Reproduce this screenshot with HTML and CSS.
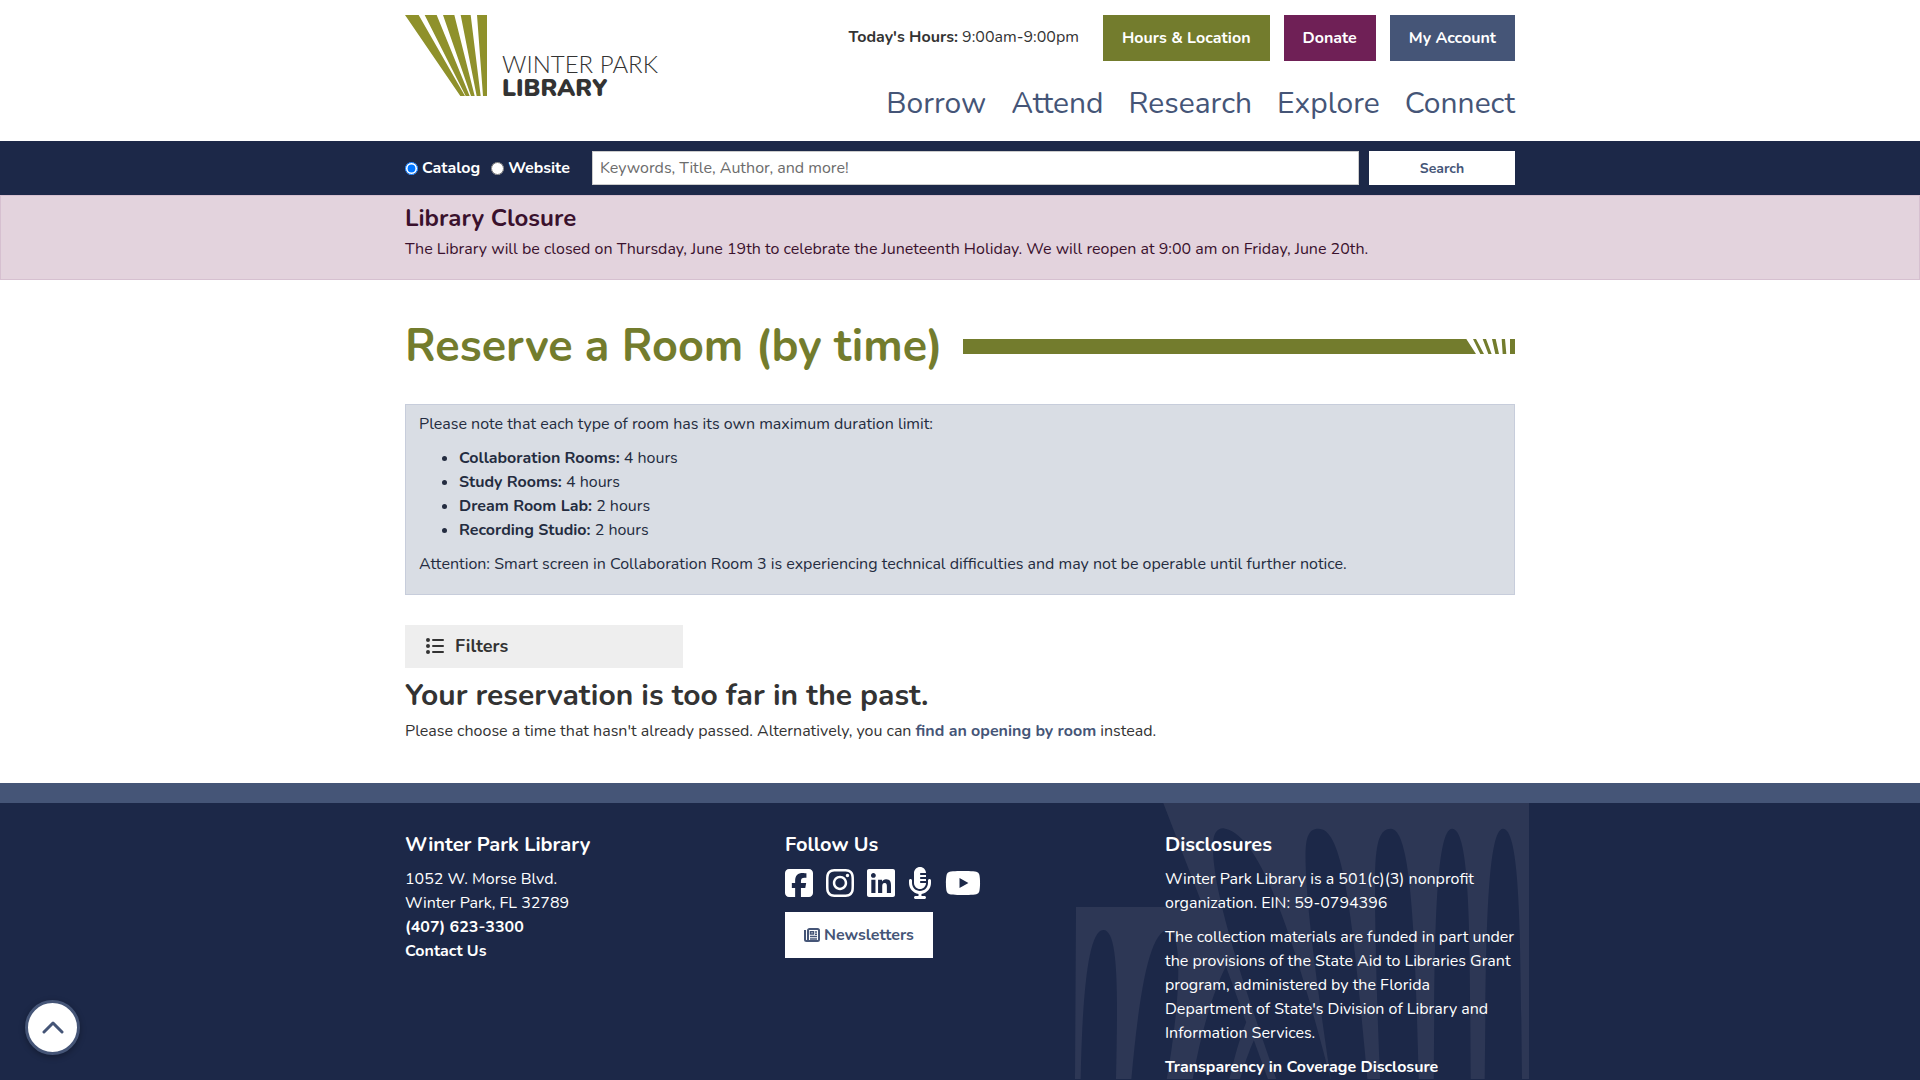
FILE: index.html
```
<!DOCTYPE html>
<html lang="en">
<head>
<meta charset="utf-8">
<meta name="viewport" content="width=device-width, initial-scale=1">
<title>Reserve a Room (by time) | Winter Park Library</title>
<link rel="stylesheet" href="styles.css">
</head>
<body>
<header class="site-header">
  <div class="container header-row">
    <a class="logo" href="#" aria-label="Winter Park Library home">
      <svg class="logo-mark" viewBox="0 0 246 243" aria-hidden="true">
        <path d="M0 0H41L180 243H166ZM59 0H95L194 243H182ZM114 0H148L209 243H198ZM167 0H197L227 243H215ZM216 0H246V243H234Z"/>
      </svg>
      <span class="logo-text"><span class="logo-top">WINTER PARK</span><span class="logo-bottom">LIBRARY</span></span>
    </a>
    <div class="header-right">
      <div class="utility">
        <p class="hours"><strong>Today's Hours:</strong> 9:00am-9:00pm</p>
        <a class="btn btn-green" href="#">Hours &amp; Location</a>
        <a class="btn btn-plum" href="#">Donate</a>
        <a class="btn btn-blue" href="#">My Account</a>
      </div>
      <nav class="main-nav" aria-label="Main">
        <a href="#">Borrow</a>
        <a href="#">Attend</a>
        <a href="#">Research</a>
        <a href="#">Explore</a>
        <a href="#">Connect</a>
      </nav>
    </div>
  </div>
</header>

<div class="search-bar">
  <form class="container search-form">
    <div class="search-scope">
      <label class="scope"><input type="radio" name="scope" value="catalog" checked>Catalog</label>
      <label class="scope"><input type="radio" name="scope" value="website">Website</label>
    </div>
    <input class="search-input" type="text" placeholder="Keywords, Title, Author, and more!" aria-label="Search terms">
    <button class="search-button" type="button">Search</button>
  </form>
</div>

<section class="alert">
  <div class="container">
    <h2 class="alert-title">Library Closure</h2>
    <p>The Library will be closed on Thursday, June 19th to celebrate the Juneteenth Holiday. We will reopen at 9:00 am on Friday, June 20th.</p>
  </div>
</section>

<main class="container main">
  <div class="title-row">
    <h1>Reserve a Room (by time)</h1>
    <div class="title-rule">
      <svg class="rule-end" viewBox="0 0 147 45" aria-hidden="true">
        <path d="M0 0H1L30 45H0ZM21 0H30L54 45H43ZM50 0H60L77 45H67ZM78 0H89L99 45H88ZM107 0H117L121 45H110ZM132 0H147V45H132Z"/>
      </svg>
    </div>
  </div>
  <section class="notice">
    <p>Please note that each type of room has its own maximum duration limit:</p>
    <ul>
      <li><strong>Collaboration Rooms:</strong> 4 hours</li>
      <li><strong>Study Rooms:</strong> 4 hours</li>
      <li><strong>Dream Room Lab:</strong> 2 hours</li>
      <li><strong>Recording Studio:</strong> 2 hours</li>
    </ul>
    <p>Attention: Smart screen in Collaboration Room 3 is experiencing technical difficulties and may not be operable until further notice.</p>
  </section>
  <button class="filters" type="button">
    <svg class="filters-icon" viewBox="0 0 18 18" aria-hidden="true">
      <circle cx="2" cy="3" r="2"/><circle cx="2" cy="9" r="2"/><circle cx="2" cy="15" r="2"/>
      <rect x="6" y="2" width="12" height="2" rx="1"/><rect x="6" y="8" width="12" height="2" rx="1"/><rect x="6" y="14" width="12" height="2" rx="1"/>
    </svg>
    Filters
  </button>
  <h2 class="message-title">Your reservation is too far in the past.</h2>
  <p>Please choose a time that hasn't already passed. Alternatively, you can <a class="text-link" href="#">find an opening by room</a> instead.</p>
</main>

<footer class="site-footer">
  <div class="container footer-grid">
    <svg class="watermark" viewBox="75 84 1363 830" preserveAspectRatio="xMinYMin slice" aria-hidden="true">
      <path class="wm-light" d="M75 915L78 396H460L340 84H1438V915Z"/>
      <path class="wm-dark" d="M92 915C96 700 110 465 160 465C205 465 204 640 198 915Z"/>
      <path class="wm-dark" d="M244 915C262 720 290 465 355 465C405 475 385 720 350 915Z"/>
      <path class="wm-dark" d="M528 574L589 742C570 790 552 850 538 915H428C450 790 485 660 528 574Z"/>
      <path class="wm-dark" d="M612 796L655 915H570C582 872 596 832 612 796Z"/>
      <path class="wm-dark" d="M680 915C600 680 489 370 489 215C489 178 500 160 520 160C625 175 720 440 843 915Z"/>
      <path class="wm-dark" d="M843 915C800 620 767 380 767 240C767 180 780 161 806 161C880 161 905 400 953 915Z"/>
      <path class="wm-dark" d="M991 915C982 700 974 440 976 290C978 195 993 161 1023 161C1085 161 1095 480 1107 915Z"/>
      <path class="wm-dark" d="M1152 915C1155 620 1150 161 1207 161C1265 161 1260 520 1263 915Z"/>
      <path class="wm-dark" d="M1305 915C1309 620 1305 161 1360 161C1415 161 1412 520 1417 915Z"/>
    </svg>
    <section>
      <h2>Winter Park Library</h2>
      <p>1052 W. Morse Blvd.<br>Winter Park, FL 32789<br><a href="#">(407) 623-3300</a><br><a href="#">Contact Us</a></p>
    </section>
    <section>
      <h2>Follow Us</h2>
      <div class="social">
        <a href="#" aria-label="Facebook"><svg viewBox="0 0 448 512" aria-hidden="true"><path d="M64 32C28.700 32 0 60.700 0 96V416c0 35.300 28.700 64 64 64h98.200V334.200H109.400V256h52.800V222.300c0-87.100 39.400-127.500 125-127.500c16.200 0 44.200 3.200 55.700 6.400V172c-6-.6-16.500-1-29.600-1c-42 0-58.200 15.900-58.200 57.200V256h83.600l-14.400 78.200H255V480H384c35.300 0 64-28.700 64-64V96c0-35.300-28.700-64-64-64H64z"/></svg></a>
        <a href="#" aria-label="Instagram"><svg viewBox="0 0 448 512" aria-hidden="true"><path d="M224.100 141c-63.600 0-114.900 51.300-114.900 114.900s51.300 114.900 114.900 114.900S339 319.500 339 255.900 287.700 141 224.100 141zm0 189.600c-41.100 0-74.700-33.500-74.700-74.700s33.500-74.700 74.700-74.700 74.700 33.500 74.700 74.700-33.600 74.700-74.700 74.700zm146.400-194.300c0 14.900-12 26.800-26.800 26.800-14.900 0-26.800-12-26.800-26.800s12-26.800 26.800-26.800 26.800 12 26.800 26.800zm76.100 27.200c-1.700-35.900-9.900-67.700-36.200-93.900-26.200-26.200-58-34.400-93.900-36.200-37-2.100-147.900-2.100-184.900 0-35.800 1.700-67.600 9.900-93.900 36.100s-34.400 58-36.200 93.900c-2.100 37-2.100 147.900 0 184.900 1.700 35.900 9.900 67.700 36.200 93.900s58 34.400 93.900 36.200c37 2.100 147.900 2.100 184.900 0 35.900-1.700 67.700-9.900 93.900-36.200 26.200-26.200 34.400-58 36.200-93.900 2.100-37 2.100-147.800 0-184.800zM398.800 388c-7.800 19.600-22.900 34.700-42.600 42.600-29.500 11.700-99.500 9-132.100 9s-102.700 2.600-132.100-9c-19.600-7.800-34.700-22.900-42.600-42.600-11.700-29.500-9-99.500-9-132.100s-2.600-102.700 9-132.100c7.800-19.600 22.900-34.700 42.600-42.600 29.500-11.700 99.500-9 132.100-9s102.700-2.600 132.100 9c19.600 7.800 34.700 22.900 42.600 42.600 11.700 29.500 9 99.500 9 132.100s2.700 102.700-9 132.100z"/></svg></a>
        <a href="#" aria-label="LinkedIn"><svg viewBox="0 0 448 512" aria-hidden="true"><path d="M416 32H31.900C14.300 32 0 46.500 0 64.300v383.400C0 465.500 14.300 480 31.900 480H416c17.600 0 32-14.500 32-32.300V64.300c0-17.800-14.400-32.300-32-32.300zM135.400 416H69V202.200h66.500V416zm-33.200-243c-21.300 0-38.500-17.300-38.500-38.500S80.900 96 102.200 96c21.200 0 38.500 17.300 38.500 38.500 0 21.300-17.200 38.500-38.500 38.500zm282.100 243h-66.400V312c0-24.800-.5-56.700-34.500-56.700-34.600 0-39.900 27-39.900 54.900V416h-66.400V202.200h63.700v29.200h.9c8.900-16.800 30.600-34.500 62.900-34.500 67.200 0 79.700 44.300 79.700 101.900V416z"/></svg></a>
        <a href="#" aria-label="Podcast"><svg viewBox="0 0 384 512" aria-hidden="true"><path d="M192 0C139 0 96 43 96 96V256c0 53 43 96 96 96s96-43 96-96H208c-8.800 0-16-7.200-16-16s7.200-16 16-16h80V192H208c-8.800 0-16-7.200-16-16s7.200-16 16-16h80V128H208c-8.800 0-16-7.200-16-16s7.200-16 16-16h80c0-53-43-96-96-96zM320 240v16c0 70.700-57.300 128-128 128s-128-57.300-128-128V216c0-13.300-10.700-24-24-24s-24 10.700-24 24v40c0 89.100 66.200 162.700 152 174.400V464H120c-13.300 0-24 10.700-24 24s10.700 24 24 24h72 72c13.300 0 24-10.700 24-24s-10.700-24-24-24H216V430.400c85.800-11.700 152-85.300 152-174.400V216c0-13.300-10.700-24-24-24s-24 10.700-24 24v24z"/></svg></a>
        <a href="#" aria-label="YouTube"><svg viewBox="0 0 576 512" aria-hidden="true"><path d="M549.700 124.100c-6.300-23.700-24.800-42.300-48.300-48.600C458.800 64 288 64 288 64S117.200 64 74.600 75.500c-23.500 6.300-42 24.900-48.300 48.600-11.400 42.900-11.400 132.300-11.400 132.300s0 89.400 11.400 132.300c6.300 23.700 24.800 41.500 48.300 47.800C117.200 448 288 448 288 448s170.800 0 213.400-11.500c23.500-6.300 42-24.200 48.300-47.800 11.400-42.900 11.400-132.300 11.400-132.300s0-89.400-11.400-132.300zm-317.500 213.500V175.200l142.700 81.200-142.700 81.200z"/></svg></a>
      </div>
      <a class="btn btn-white" href="#">
        <svg class="news-icon" viewBox="0 0 16 14" aria-hidden="true"><path d="M1 2V11.500A1.500 1.500 0 0 0 4 11.500V2.500A1.500 1.500 0 0 1 5.500 1H13.500A1.500 1.500 0 0 1 15 2.500V11.500A1.500 1.500 0 0 1 13.500 13H2.500"/><path class="news-lines" d="M6 8.500H13M6 11H13M11 4H13M11 6.200H13M6.500 3.800H9.500V6H6.500Z"/></svg>
        Newsletters
      </a>
    </section>
    <section>
      <h2>Disclosures</h2>
      <p class="disclosure">Winter Park Library is a 501(c)(3) nonprofit organization. EIN: 59-0794396</p>
      <p class="disclosure">The collection materials are funded in part under the provisions of the State Aid to Libraries Grant program, administered by the Florida Department of State's Division of Library and Information Services.</p>
      <p class="disclosure"><a href="#">Transparency in Coverage Disclosure</a></p>
    </section>
  </div>
</footer>

<button class="to-top" type="button" aria-label="Back to top">
  <svg viewBox="0 0 22 13" aria-hidden="true"><path d="M2 11L11 2L20 11"/></svg>
</button>
</body>
</html>
```
FILE: styles.css
```
* { box-sizing: border-box; }
body {
  margin: 0;
  min-height: 100vh;
  display: flex;
  flex-direction: column;
  background: #fff;
  color: #333;
  font: 16px/24px Nunito, Lato, sans-serif;
}
h1, h2, p, ul { margin: 0; }
a { text-decoration: none; }
button, input { font-family: inherit; }
.container { width: 100%; max-width: 1110px; margin: 0 auto; }

/* Header */
.site-header { padding: 15px 0; }
.header-row { display: flex; justify-content: space-between; align-items: flex-start; }
.logo { display: flex; align-items: flex-end; gap: 15px; color: #333; }
.logo-mark { width: 82px; height: 81px; fill: #8f912b; }
.logo-text { display: flex; flex-direction: column; font-size: 24px; line-height: 24px; margin-bottom: -4px; }
.logo-top { font-family: Lato, sans-serif; font-weight: 300; }
.logo-bottom { font-weight: 900; }
.utility { display: flex; align-items: center; justify-content: flex-end; gap: 14px; }
.hours { margin: 0 10px 2px 0; }
.btn {
  display: inline-flex;
  align-items: center;
  gap: 4px;
  height: 46px;
  padding: 0 19px;
  color: #fff;
  font-weight: 700;
}
.btn-green { background: #737c2d; }
.btn-plum { background: #6f2056; }
.btn-blue { background: #455577; }
.btn-white { background: #fff; color: #455577; }
.main-nav { display: flex; justify-content: flex-end; gap: 25px; margin-top: 21px; }
.main-nav a { color: #455577; font-size: 30px; line-height: 44px; }

/* Search */
.search-bar { background: #1c2848; padding: 10px 0; }
.search-form { display: flex; gap: 10px; }
.search-scope { display: flex; align-items: center; gap: 11px; width: 177px; color: #fff; font-weight: 700; }
.scope { display: flex; align-items: center; gap: 4px; }
.scope input { width: 13px; height: 13px; margin: 0; }
.search-input {
  flex: 1;
  height: 34px;
  padding: 0 7px;
  border: 1px solid #ccc;
  font-size: 16px;
  color: #333;
}
.search-input::placeholder { color: #6c6c6c; }
.search-button { width: 146px; height: 34px; border: 0; background: #fff; color: #455577; font-size: 14px; font-weight: 700; }

/* Closure alert */
.alert { padding: 7px 0 18px; border: 1px solid #d6c0d0; background: #e3d3dd; color: #3a112d; }
.alert-title { margin-bottom: 4px; font-size: 24px; line-height: 30px; }

/* Main content */
.main { padding-bottom: 40px; }
.title-row { display: flex; align-items: center; gap: 20px; padding: 37px 0 27px; }
h1 { color: #737c2d; font-size: 45px; line-height: 60px; font-weight: 700; }
.title-rule {
  flex: 1;
  display: flex;
  justify-content: flex-end;
  height: 15px;
  margin-bottom: 2px;
}
.title-rule::before { content: ""; flex: 1; background: #737c2d; }
.rule-end { width: 49px; height: 15px; fill: #737c2d; }
.notice { padding: 7px 13px 18px; border: 1px solid #c7cddb; background: #d9dde4; color: #242c40; }
.notice ul { margin: 10px 0; padding-left: 40px; }
.filters {
  display: flex;
  align-items: center;
  gap: 11px;
  width: 278px;
  height: 43px;
  margin: 30px 0 10px;
  padding: 0 21px 2px;
  border: 0;
  background: #eee;
  color: #333;
  font-size: 18px;
  font-weight: 700;
}
.filters-icon { width: 18px; height: 18px; fill: #333; }
.message-title { margin-bottom: 5px; font-size: 30px; line-height: 36px; }
.text-link { color: #455577; font-weight: 700; }

/* Footer */
.site-footer { flex: 1; border-top: 20px solid #455577; background: #1c2848; color: #fff; }
.footer-grid { position: relative; display: grid; grid-template-columns: repeat(3, 1fr); gap: 30px; height: 100%; padding-top: 30px; }
.footer-grid section { position: relative; }
.footer-grid h2 { margin-bottom: 10px; font-size: 20px; line-height: 24px; }
.footer-grid section a { color: #fff; font-weight: 700; }
.footer-grid section .btn-white { color: #455577; }
.watermark { position: absolute; top: 0; right: -14px; width: 454px; height: 100%; }
.wm-light { fill: #2d3755; }
.wm-dark { fill: #1c2848; }
.social { display: flex; gap: 13px; height: 32px; margin-bottom: 13px; }
.social svg { display: block; height: 32px; fill: #fff; }
.news-icon { width: 16px; height: 14px; fill: none; stroke: #455577; stroke-width: 2; }
.news-lines { stroke-width: 1.5; }
.disclosure { margin-bottom: 10px; }
.disclosure:last-child { margin-bottom: 0; }

/* Back to top */
.to-top {
  position: fixed;
  left: 25px;
  bottom: 25px;
  display: grid;
  place-items: center;
  width: 55px;
  height: 55px;
  padding: 0;
  border: 3px solid #455577;
  border-radius: 50%;
  background: #fff;
  box-shadow: 0 2px 6px rgba(0, 0, 0, 0.3);
}
.to-top svg { width: 22px; height: 13px; fill: none; stroke: #455577; stroke-width: 3; stroke-linecap: round; stroke-linejoin: round; }
```
